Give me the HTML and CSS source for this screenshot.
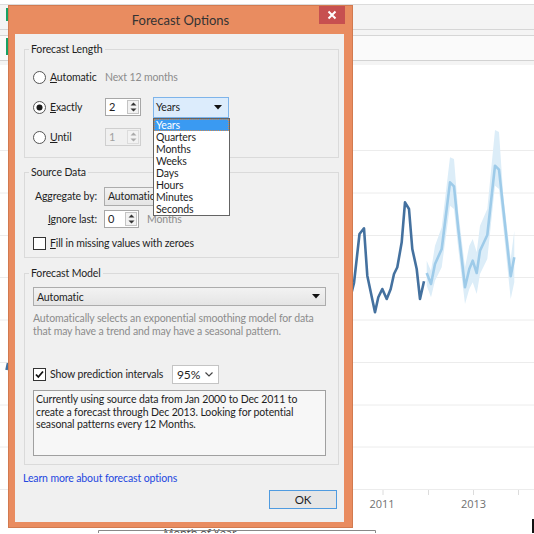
FILE: index.html
```html
<!DOCTYPE html>
<html>
<head>
<meta charset="utf-8">
<link rel="stylesheet" href="styles.css">
</head>
<body>
<div class="app">
  <div class="topgap"></div>
  <div class="bar bar1"><div class="green"></div></div>
  <div class="bar bar1b"></div>
  <div class="bar bar2"><div class="green green2"></div></div>
  <div class="bar bar2b"></div>
  <svg class="chart" viewBox="0 66 534 468" width="534" height="468">
    <g class="grid">
      <line x1="0" x2="534" y1="151.5" y2="151.5"/>
      <line x1="0" x2="534" y1="194" y2="194"/>
      <line x1="0" x2="534" y1="236.5" y2="236.5"/>
      <line x1="0" x2="534" y1="278.5" y2="278.5"/>
      <line x1="0" x2="534" y1="321" y2="321"/>
      <line x1="0" x2="534" y1="363.5" y2="363.5"/>
      <line x1="0" x2="534" y1="406" y2="406"/>
      <line x1="0" x2="534" y1="448" y2="448"/>
      <line x1="0" x2="534" y1="490.5" y2="490.5"/>
    </g>
    <g class="ticks">
      <line x1="383" x2="383" y1="491" y2="496"/>
      <line x1="428.5" x2="428.5" y1="491" y2="496"/>
      <line x1="473.5" x2="473.5" y1="491" y2="496"/>
      <line x1="518.5" x2="518.5" y1="491" y2="496"/>
    </g>
    <text class="axis" x="382" y="509">2011</text>
    <text class="axis" x="473.5" y="509">2013</text>
    <polygon class="band" points="426.7,261.7 431,271.7 435,246.7 441.7,228.3 450,158.3 454,160 458.3,213.3 465,268.3 469.3,246.7 472.7,240 476.7,253.3 480,226.7 487.3,210 495,131 499,133 503.3,196.7 510.7,260 514.3,231.7 514.3,283.3 510.7,300 503.3,228.3 499,190 495,186.7 487.3,260 480,275 476.7,295 472.7,283.3 469.3,290 465,305 458.3,250 454,210 450,206.7 441.7,268.3 435,281.7 431,298.3 426.7,286.7"/>
    <polyline class="fc" points="426.7,274 431,285 435,265 441.7,250 450,183.3 454,187.3 458.3,230 465,288.3 469.3,270 472.7,261.7 476.7,274 480,251.7 487.3,236 495,166.7 499,170.7 503.3,210 510.7,277.3 514.3,258.3"/>
    <polyline class="act" points="350,300 354,284 359.5,235 364,229.3 367.3,276.7 375,313.3 378.3,298.3 382.3,290 386.7,300 390.7,290 394,275 397.3,268.3 401.7,243.3 405,203.3 409,210 412.3,250 416.7,270 420,300 424,282.3"/>
    <polyline class="act" points="6.5,371 8,364"/>
    <text class="xtitle" x="200" y="538">Month of Year</text>
    <polyline class="box" points="98.5,540 98.5,531.5 375.5,531.5 375.5,540"/>
    <rect x="532" y="520" width="2" height="14" fill="#111"/>
  </svg>

  <div class="dialog">
    <div class="titlebar">Forecast Options</div>
    <div class="close"><svg width="10" height="10" viewBox="0 0 10 10"><path d="M1.5 1.5 L8.5 8.5 M8.5 1.5 L1.5 8.5" stroke="#fff" stroke-width="2"/></svg></div>
    <div class="client">
      <fieldset class="group g1">
        <legend>Forecast Length</legend>
        <div class="row">
          <div class="cell opt">
            <svg class="radio" width="13" height="13" viewBox="0 0 13 13"><circle cx="6.5" cy="6.5" r="6" fill="#fff" stroke="#555"/></svg>
            <span><u>A</u>utomatic</span>
          </div>
          <span class="muted">Next 12 months</span>
        </div>
        <div class="row">
          <div class="cell opt">
            <svg class="radio" width="13" height="13" viewBox="0 0 13 13"><circle cx="6.5" cy="6.5" r="6" fill="#fff" stroke="#555"/><circle cx="6.5" cy="6.5" r="3" fill="#1a1a1a"/></svg>
            <span><u>E</u>xactly</span>
          </div>
          <div class="spin">
            <div class="spin-val">2</div>
            <div class="spin-btns"><svg width="7" height="12" viewBox="0 0 7 12"><path d="M0.5 4.5 L3.5 1.5 L6.5 4.5 Z M0.5 7.5 L3.5 10.5 L6.5 7.5 Z" fill="#333"/></svg></div>
          </div>
          <div class="years">
            <span>Years</span>
            <svg width="8" height="5" viewBox="0 0 8 5"><path d="M0 0 L8 0 L4 4.5 Z" fill="#111"/></svg>
            <div class="list">
              <div class="item sel">Years</div>
              <div class="item">Quarters</div>
              <div class="item">Months</div>
              <div class="item">Weeks</div>
              <div class="item">Days</div>
              <div class="item">Hours</div>
              <div class="item">Minutes</div>
              <div class="item">Seconds</div>
            </div>
          </div>
        </div>
        <div class="row">
          <div class="cell opt">
            <svg class="radio" width="13" height="13" viewBox="0 0 13 13"><circle cx="6.5" cy="6.5" r="6" fill="#fff" stroke="#555"/></svg>
            <span><u>U</u>ntil</span>
          </div>
          <div class="spin disabled">
            <div class="spin-val">1</div>
            <div class="spin-btns"><svg width="7" height="12" viewBox="0 0 7 12"><path d="M0.5 4.5 L3.5 1.5 L6.5 4.5 Z M0.5 7.5 L3.5 10.5 L6.5 7.5 Z" fill="#aaa"/></svg></div>
          </div>
        </div>
      </fieldset>

      <fieldset class="group g2">
        <legend>Source Data</legend>
        <div class="row r-agg">
          <div class="lbl">A<u>g</u>gregate by:</div>
          <div class="combo agg"><span>Automatic</span></div>
        </div>
        <div class="row r-ign">
          <div class="lbl"><u>I</u>gnore last:</div>
          <div class="spin small">
            <div class="spin-val">0</div>
            <div class="spin-btns"><svg width="7" height="12" viewBox="0 0 7 12"><path d="M0.5 4.5 L3.5 1.5 L6.5 4.5 Z M0.5 7.5 L3.5 10.5 L6.5 7.5 Z" fill="#333"/></svg></div>
          </div>
          <span class="muted months">Months</span>
        </div>
        <div class="row r-fill">
          <svg class="chk" width="13" height="13" viewBox="0 0 13 13"><rect x="0.5" y="0.5" width="12" height="12" fill="#fff" stroke="#333"/></svg>
          <span class="chk-lbl"><u>F</u>ill in missing values with zeroes</span>
        </div>
      </fieldset>

      <fieldset class="group g3">
        <legend>Forecast Model</legend>
        <div class="combo model">
          <span>Automatic</span>
          <svg width="8" height="5" viewBox="0 0 8 5"><path d="M0 0 L8 0 L4 4.5 Z" fill="#111"/></svg>
        </div>
        <div class="desc">Automatically selects an exponential smoothing model for data<br>that may have a trend and may have a seasonal pattern.</div>
        <div class="row r-pi">
          <div class="pi-cell">
            <svg class="chk" width="13" height="13" viewBox="0 0 13 13"><rect x="0.5" y="0.5" width="12" height="12" fill="#fff" stroke="#333"/><path d="M3 6.5 L5.3 9 L10 3.5" fill="none" stroke="#111" stroke-width="1.8"/></svg>
            <span class="chk-lbl">Show prediction intervals</span>
          </div>
          <div class="pct">
            <span>95%</span>
            <svg width="8" height="5" viewBox="0 0 8 5"><path d="M0.5 0.5 L4 4 L7.5 0.5" fill="none" stroke="#444" stroke-width="1.2"/></svg>
          </div>
        </div>
        <div class="info">Currently using source data from Jan 2000 to Dec 2011 to<br>create a forecast through Dec 2013. Looking for potential<br>seasonal patterns every 12 Months.</div>
      </fieldset>

      <div class="link">Learn more about forecast options</div>
      <div class="actions"><div class="ok">OK</div></div>
    </div>
  </div>
</div>
</body>
</html>
```
FILE: styles.css
```css
html, body {
  margin: 0;
  padding: 0;
  background: #fff;
}
body {
  font-family: "Lato", "Open Sans", sans-serif;
  font-size: 10.5px;
  letter-spacing: -0.12px;
  color: #1e1e1e;
}
.app {
  position: relative;
  width: 534px;
  height: 534px;
  overflow: hidden;
  background: #fff;
}
.topgap {
  height: 4px;
  border-bottom: 1px solid #dcdcdc;
}
.bar {
  display: flex;
  background: #f4f4f4;
}
.bar1 { height: 24px; border-bottom: 1px solid #d6d6d6; }
.bar1b { height: 5px; border-bottom: 1px solid #d6d6d6; }
.bar2 { height: 24px; background: #fafafa; border-bottom: 1px solid #d2d2d2; }
.bar2b { height: 4px; }
.green {
  width: 2px;
  height: 13px;
  margin: 3px 0 0 6px;
  background: #17a163;
}
.green2 { height: 17px; margin-top: 2px; }
.chart { display: block; }
.grid line { stroke: #ececec; stroke-width: 1; }
.ticks line { stroke: #dcdcdc; stroke-width: 1; }
.axis { font-family: "Open Sans", sans-serif; font-size: 11px; letter-spacing: 0; fill: #707070; text-anchor: middle; }
.xtitle { font-family: "Open Sans", sans-serif; font-size: 11px; letter-spacing: 0; fill: #444; text-anchor: middle; }
.box { fill: none; stroke: #888; stroke-width: 1; }
.band { fill: #dcedf8; }
.fc { fill: none; stroke: #9ecbe9; stroke-width: 2.6; stroke-linejoin: round; }
.act { fill: none; stroke: #44719f; stroke-width: 2.6; stroke-linejoin: round; }

/* dialog */
.dialog {
  position: absolute;
  left: 8px;
  top: 5px;
  width: 345px;
  height: 523px;
  box-sizing: border-box;
  background: #e98c60;
  border: 1px solid #d27a4f;
}
.titlebar {
  height: 28px;
  display: flex;
  align-items: center;
  justify-content: center;
  font-size: 13px;
  letter-spacing: 0;
  color: #333;
}
.close {
  position: absolute;
  top: 0;
  right: 7px;
  width: 26px;
  height: 18px;
  background: #c75050;
  display: flex;
  align-items: center;
  justify-content: center;
}
.client {
  position: relative;
  margin: 0 8px 0 6px;
  height: 488px;
  background: #f0f0f0;
  padding-top: 8px;
  box-sizing: border-box;
}
.group {
  margin: 0 0 0 9px;
  width: 315px;
  box-sizing: border-box;
  border: 1px solid #dadada;
  padding: 11px 8px 10px 8px;
}
.group legend {
  padding: 0 2px;
  margin-left: -4px;
  line-height: 14px;
}
.g2 { margin-top: 7px; padding-top: 7px; padding-bottom: 4px; }
.g3 { margin-top: 8px; padding-top: 7px; padding-bottom: 8px; }
.row {
  display: flex;
  align-items: center;
  height: 20px;
}
.g1 .row + .row { margin-top: 10px; }
.cell { display: flex; align-items: center; }
.opt { width: 72px; }
.radio { margin-right: 4px; flex: none; }
.muted { color: #8c8c8c; }
.spin {
  display: flex;
  width: 36px;
  height: 18px;
  box-sizing: border-box;
  border: 1px solid #a7a7a7;
  background: #fff;
}
.spin-val {
  flex: 1;
  padding-left: 3px;
  line-height: 16px;
  font-size: 11px;
}
.spin-btns {
  width: 12px;
  margin: 1px;
  box-sizing: border-box;
  border: 1px solid #c4c4c4;
  background: #f2f2f2;
  display: flex;
  align-items: center;
  justify-content: center;
}
.spin.disabled { background: #f0f0f0; border-color: #cfcfcf; color: #a0a0a0; }
.spin.disabled .spin-btns { border-color: #dcdcdc; }
.years {
  position: relative;
  margin-left: 12px;
  width: 76px;
  height: 21px;
  box-sizing: border-box;
  border: 1px solid #7eb4ea;
  background: #dcecfc;
  display: flex;
  align-items: center;
  justify-content: space-between;
  padding: 0 6px 0 2px;
}
.list {
  position: absolute;
  left: -1px;
  top: 20px;
  width: 77px;
  box-sizing: border-box;
  border: 1px solid #646464;
  background: #fff;
  z-index: 2;
}
.item {
  height: 12px;
  line-height: 12px;
  padding-left: 2px;
}
.item.sel {
  background: #3a9af2;
  color: #fff;
  outline: 1px dotted #d08a50;
  outline-offset: -1px;
}
.lbl {
  width: 64px;
  text-align: right;
  margin-right: 7px;
  white-space: nowrap;
}
.r-ign { margin-top: 3px; }
.r-fill { margin-top: 4px; }
.combo {
  height: 19px;
  box-sizing: border-box;
  border: 1px solid #acacac;
  background: linear-gradient(#f2f2f2, #e5e5e5);
  display: flex;
  align-items: center;
  justify-content: space-between;
  padding: 0 5px 0 3px;
}
.agg { width: 111px; }
.spin.small { width: 35px; height: 18px; }
.months { margin-left: 8px; }
.chk { flex: none; margin-right: 4px; }
.model { width: 293px; }
.desc {
  margin-top: 6px;
  line-height: 13px;
  color: #8c8c8c;
  white-space: nowrap;
}
.r-pi { margin-top: 26px; }
.pi-cell { width: 139px; display: flex; align-items: center; }
.pct {
  width: 47px;
  height: 19px;
  box-sizing: border-box;
  border: 1px solid #c4c4c4;
  background: #fff;
  display: flex;
  align-items: center;
  justify-content: space-between;
  padding: 0 5px 0 4px;
  font-size: 12px;
}
.info {
  margin-top: 6px;
  width: 293px;
  height: 66px;
  box-sizing: border-box;
  border: 1px solid #a0a0a0;
  background: #f7f7f7;
  padding: 2px 2px;
  line-height: 12.5px;
  white-space: nowrap;
}
.link {
  margin: 6px 0 0 8px;
  line-height: 14px;
  color: #2447df;
}
.actions {
  display: flex;
  justify-content: flex-end;
  margin: 5px 7px 0 0;
}
.ok {
  width: 68px;
  height: 19px;
  box-sizing: border-box;
  border: 1px solid #4f9be0;
  background: #e6e6e6;
  display: flex;
  align-items: center;
  justify-content: center;
  font-size: 11.5px;
}
```
